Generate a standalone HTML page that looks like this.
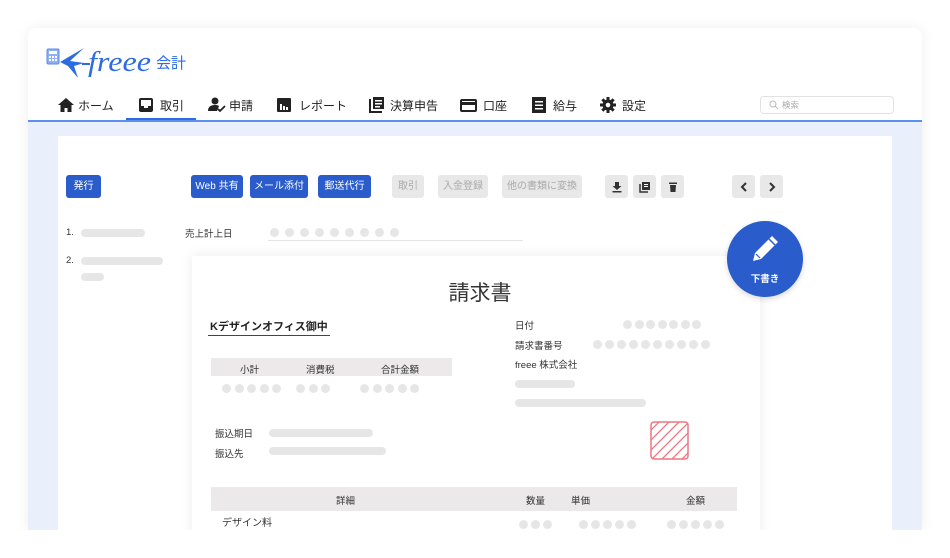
<!DOCTYPE html>
<html><head><meta charset="utf-8"><style>
*{margin:0;padding:0;box-sizing:border-box}
body{width:950px;height:558px;background:#fff;position:relative;overflow:hidden;font-family:"Liberation Sans","Noto Sans CJK JP",sans-serif;color:#333}
.a{position:absolute}
.card{left:28px;top:28px;width:894px;height:502px;background:#fff;border-radius:9px 9px 0 0;box-shadow:0 0 14px rgba(0,0,0,.07);overflow:hidden}
.nav{font-size:12px;color:#222;top:97px;white-space:nowrap}
.btn{top:175px;height:23px;border-radius:3px;font-size:10px;line-height:23px;text-align:center;color:#fff;background:#2a5ccc}
.gb{background:#e8e8e8;color:#aaa}
.bar{height:8px;border-radius:4px;background:#e6e6e6}
.dots{display:flex;gap:6px}
.dots i{width:9px;height:9px;border-radius:50%;background:#e6e6e6;display:block}
.t{font-size:9.5px;color:#333;white-space:nowrap}
</style></head><body>
<div class="a card"></div>
<!-- logo -->
<svg class="a" style="left:44px;top:44px" width="150" height="38" viewBox="0 0 150 38">
<rect x="3" y="5" width="12" height="15" rx="1.5" fill="#8fb1f2" stroke="#5c8ae8" stroke-width="1"/>
<g fill="#fff"><rect x="5" y="7" width="8" height="3"/><rect x="5" y="12" width="2" height="2"/><rect x="8" y="12" width="2" height="2"/><rect x="11" y="12" width="2" height="2"/><rect x="5" y="15" width="2" height="2"/><rect x="8" y="15" width="2" height="2"/><rect x="11" y="15" width="2" height="2"/></g>
<path d="M16 18 L40 4 L26 17 L40 19 L30 22 L34 34 L24 22 Z" fill="#2d6be0"/>
<path d="M38 20 L46 20" stroke="#2d6be0" stroke-width="2"/>
<text x="44" y="27" font-family="Liberation Serif,serif" font-style="italic" font-size="29" fill="#2d6be0" textLength="63" lengthAdjust="spacingAndGlyphs">freee</text>
<text x="112" y="24" font-size="15" fill="#2d6be0" font-family="Liberation Sans,Noto Sans CJK JP,sans-serif">会計</text>
</svg>
<!-- nav -->
<svg class="a" style="left:58px;top:98px" width="16" height="14" viewBox="0 0 16 14"><path d="M8 0 L16 7 H13.5 V14 H9.5 V10 H6.5 V14 H2.5 V7 H0 Z" fill="#222"/></svg>
<div class="a nav" style="left:78px">ホーム</div>
<svg class="a" style="left:139px;top:98px" width="14" height="14"><rect x="1" y="1" width="12" height="12" rx="1" fill="none" stroke="#222" stroke-width="2"/><rect x="1" y="8" width="12" height="5" fill="#222"/><rect x="5" y="8" width="4" height="2" fill="#fff"/></svg>
<div class="a nav" style="left:160px">取引</div>
<div class="a" style="left:126px;top:118px;width:70px;height:3px;background:#2d6be0"></div>
<svg class="a" style="left:208px;top:97px" width="18" height="16"><circle cx="7" cy="4" r="3.5" fill="#222"/><path d="M0 14 Q0 8 7 8 Q10 8 11 9 L9 14 Z" fill="#222"/><path d="M10 12 L12 14 L17 9" stroke="#222" stroke-width="1.8" fill="none"/></svg>
<div class="a nav" style="left:229px">申請</div>
<svg class="a" style="left:277px;top:98px" width="14" height="14"><rect width="14" height="14" rx="1" fill="#222"/><rect x="3" y="6" width="2" height="6" fill="#fff"/><rect x="6" y="8" width="2" height="4" fill="#fff"/><rect x="9" y="9" width="2" height="3" fill="#fff"/></svg>
<div class="a nav" style="left:299px">レポート</div>
<svg class="a" style="left:369px;top:96px" width="16" height="17"><path d="M1 3 V16 H13" stroke="#222" stroke-width="2" fill="none"/><rect x="4" y="1" width="11" height="12" fill="#222"/><rect x="6" y="4" width="7" height="1.5" fill="#fff"/><rect x="6" y="7" width="7" height="1.5" fill="#fff"/><rect x="6" y="10" width="5" height="1.5" fill="#fff"/></svg>
<div class="a nav" style="left:390px">決算申告</div>
<svg class="a" style="left:460px;top:99px" width="17" height="13"><rect x="1" y="1" width="15" height="11" rx="1" fill="none" stroke="#222" stroke-width="2"/><rect x="1" y="3" width="15" height="3" fill="#222"/></svg>
<div class="a nav" style="left:483px">口座</div>
<svg class="a" style="left:532px;top:97px" width="14" height="16"><rect width="14" height="16" fill="#222"/><rect x="3" y="4" width="8" height="1.5" fill="#fff"/><rect x="3" y="7.5" width="8" height="1.5" fill="#fff"/><rect x="3" y="11" width="8" height="1.5" fill="#fff"/></svg>
<div class="a nav" style="left:553px">給与</div>
<svg class="a" style="left:600px;top:97px" width="16" height="16" viewBox="0 0 16 16"><g fill="#222"><circle cx="8" cy="8" r="5.5"/><rect x="6.5" y="0" width="3" height="16"/><rect x="0" y="6.5" width="16" height="3"/><rect x="6.5" y="0" width="3" height="16" transform="rotate(45 8 8)"/><rect x="6.5" y="0" width="3" height="16" transform="rotate(-45 8 8)"/></g><circle cx="8" cy="8" r="2.3" fill="#fff"/></svg>
<div class="a nav" style="left:622px">設定</div>
<div class="a" style="left:760px;top:96px;width:134px;height:18px;border:1px solid #e2e2e2;border-radius:4px"></div>
<svg class="a" style="left:769px;top:100px" width="10" height="10"><circle cx="4" cy="4" r="3" fill="none" stroke="#bbb" stroke-width="1"/><path d="M6 6 L9 9" stroke="#bbb"/></svg>
<div class="a" style="left:782px;top:99px;font-size:8.5px;color:#aaa">検索</div>
<!-- content bg -->
<div class="a" style="left:28px;top:120px;width:894px;height:2px;background:#5b8ff0"></div>
<div class="a" style="left:28px;top:122px;width:894px;height:408px;background:#e9f0fc"></div>
<div class="a" style="left:58px;top:136px;width:834px;height:394px;background:#fff"></div>
<!-- buttons -->
<div class="a btn" style="left:66px;width:35px">発行</div>
<div class="a btn" style="left:191px;width:52px">Web 共有</div>
<div class="a btn" style="left:250px;width:58px">メール添付</div>
<div class="a btn" style="left:318px;width:53px">郵送代行</div>
<div class="a btn gb" style="left:392px;width:32px">取引</div>
<div class="a btn gb" style="left:438px;width:50px">入金登録</div>
<div class="a btn gb" style="left:502px;width:80px">他の書類に変換</div>
<div class="a btn gb" style="left:605px;width:23px"></div>
<div class="a btn gb" style="left:633px;width:23px"></div>
<div class="a btn gb" style="left:661px;width:23px"></div>
<div class="a btn gb" style="left:732px;width:23px"></div>
<div class="a btn gb" style="left:760px;width:23px"></div>
<svg class="a" style="left:611px;top:181px" width="12" height="12"><path d="M4 1 H8 V5 H10.5 L6 9 L1.5 5 H4Z" fill="#333"/><rect x="1.5" y="10" width="9" height="1.5" fill="#333"/></svg>
<svg class="a" style="left:639px;top:181px" width="12" height="12"><path d="M1 3 V11 H9" stroke="#333" stroke-width="1.5" fill="none"/><rect x="3" y="1" width="8" height="8" fill="#333"/><rect x="5" y="3" width="4" height="1" fill="#fff"/><rect x="5" y="5" width="4" height="1" fill="#fff"/></svg>
<svg class="a" style="left:667px;top:181px" width="12" height="12"><rect x="2" y="1.5" width="8" height="1.5" fill="#333"/><path d="M3 4 H9 L8.5 11 H3.5Z" fill="#333"/></svg>
<svg class="a" style="left:738px;top:181px" width="12" height="12"><path d="M8 2 L4 6 L8 10" stroke="#333" stroke-width="2" fill="none"/></svg>
<svg class="a" style="left:766px;top:181px" width="12" height="12"><path d="M4 2 L8 6 L4 10" stroke="#333" stroke-width="2" fill="none"/></svg>
<!-- list -->
<div class="a t" style="left:66px;top:227px">1.</div>
<div class="a bar" style="left:81px;top:229px;width:64px"></div>
<div class="a t" style="left:66px;top:255px">2.</div>
<div class="a bar" style="left:81px;top:257px;width:82px"></div>
<div class="a bar" style="left:81px;top:273px;width:23px"></div>
<div class="a t" style="left:185px;top:226px">売上計上日</div>
<div class="a dots" style="left:270px;top:228px"><i></i><i></i><i></i><i></i><i></i><i></i><i></i><i></i><i></i></div>
<div class="a" style="left:268px;top:240px;width:255px;height:1px;background:#e4e4e4"></div>
<!-- paper -->
<div class="a" style="left:192px;top:256px;width:568px;height:290px;background:#fff;box-shadow:0 0 12px rgba(0,0,0,.08)"></div>
<div class="a" style="left:192px;top:277px;width:576px;text-align:center;font-size:21px;color:#333">請求書</div>
<div class="a" style="left:208px;top:318px;font-size:11px;color:#222;font-weight:bold;border-bottom:1.5px solid #444;padding:0 2px 1px">Kデザインオフィス御中</div>
<div class="a t" style="left:515px;top:318px">日付</div>
<div class="a dots" style="left:623px;top:320px;gap:2.5px"><i></i><i></i><i></i><i></i><i></i><i></i><i></i></div>
<div class="a t" style="left:515px;top:338px">請求書番号</div>
<div class="a dots" style="left:593px;top:340px;gap:3px"><i></i><i></i><i></i><i></i><i></i><i></i><i></i><i></i><i></i><i></i></div>
<div class="a t" style="left:515px;top:357px">freee 株式会社</div>
<div class="a bar" style="left:515px;top:380px;width:60px"></div>
<div class="a bar" style="left:515px;top:399px;width:131px"></div>
<div class="a" style="left:211px;top:358px;width:241px;height:18px;background:#ebe9ea"></div>
<div class="a t" style="left:240px;top:362px">小計</div>
<div class="a t" style="left:306px;top:362px">消費税</div>
<div class="a t" style="left:381px;top:362px">合計金額</div>
<div class="a dots" style="left:222px;top:384px;gap:3.5px"><i></i><i></i><i></i><i></i><i></i></div>
<div class="a dots" style="left:296px;top:384px;gap:3.5px"><i></i><i></i><i></i></div>
<div class="a dots" style="left:360px;top:384px;gap:3.5px"><i></i><i></i><i></i><i></i><i></i></div>
<div class="a t" style="left:215px;top:426px">振込期日</div>
<div class="a bar" style="left:269px;top:429px;width:104px"></div>
<div class="a t" style="left:215px;top:446px">振込先</div>
<div class="a bar" style="left:269px;top:447px;width:117px"></div>
<svg class="a" style="left:650px;top:421px" width="39" height="39"><defs><clipPath id="c"><rect x="1" y="1" width="37" height="37" rx="3"/></clipPath></defs><g clip-path="url(#c)" stroke="#ee7680" stroke-width="1.3"><path d="M-10 20 L20 -10 M-10 30 L30 -10 M-10 40 L40 -10 M-10 50 L50 -10 M0 50 L50 0 M10 50 L50 10 M20 50 L50 20 M-10 10 L10 -10"/></g><rect x="1" y="1" width="37" height="37" rx="3" fill="none" stroke="#ee7680" stroke-width="1.5"/></svg>
<div class="a" style="left:211px;top:487px;width:526px;height:24px;background:#ebe9ea"></div>
<div class="a t" style="left:336px;top:493px">詳細</div>
<div class="a t" style="left:526px;top:493px">数量</div>
<div class="a t" style="left:571px;top:493px">単価</div>
<div class="a t" style="left:686px;top:493px">金額</div>
<div class="a t" style="left:222px;top:514px;font-size:10px">デザイン料</div>
<div class="a dots" style="left:519px;top:520px;gap:3px"><i></i><i></i><i></i></div>
<div class="a dots" style="left:579px;top:520px;gap:3px"><i></i><i></i><i></i><i></i><i></i></div>
<div class="a dots" style="left:667px;top:520px;gap:3px"><i></i><i></i><i></i><i></i><i></i></div>
<div class="a" style="left:0;top:530px;width:950px;height:28px;background:#fff"></div>
<!-- draft button -->
<div class="a" style="left:727px;top:221px;width:76px;height:76px;border-radius:50%;background:#2a5ccc;box-shadow:0 2px 6px rgba(0,0,0,.15)"></div>
<svg class="a" style="left:748px;top:234px" width="34" height="30" viewBox="0 0 34 30"><path d="M24 2 L30 8 L13 25 L5 27 L7 19 Z" fill="#fff"/><path d="M21 5 L27 11" stroke="#2a5ccc" stroke-width="1.5"/><path d="M8 20 L12 24" stroke="#2a5ccc" stroke-width="1.2"/></svg>
<div class="a" style="left:727px;top:271px;width:76px;text-align:center;font-size:9.5px;color:#fff;font-weight:bold">下書き</div>
</body></html>
